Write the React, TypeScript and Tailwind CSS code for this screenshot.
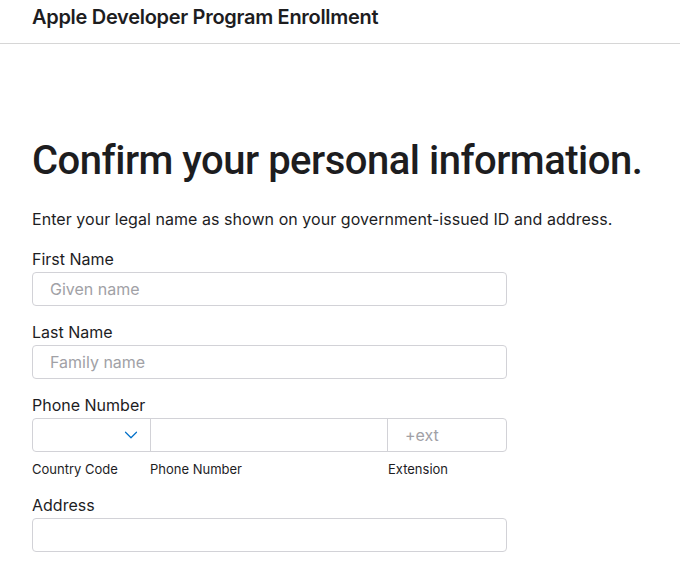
import { ChevronDown } from 'lucide-react'

const font = { fontFamily: 'Inter, "Liberation Sans", sans-serif' }
const headFont = { fontFamily: 'Roboto, "Liberation Sans", sans-serif' }

function Field({ label, placeholder }: { label: string; placeholder?: string }) {
  return (
    <div className="mb-[16px]">
      <label className="block text-[16px] leading-[20px] text-[#1d1d1f] mb-[3px]">{label}</label>
      <input
        placeholder={placeholder}
        className="w-[475px] h-[34px] rounded-[4px] border border-[#d2d2d7] px-[17px] text-[16px] text-[#1d1d1f] placeholder:text-[#a1a1a6] outline-none"
      />
    </div>
  )
}

export default function App() {
  return (
    <div className="w-[680px] h-[568px] bg-white overflow-hidden" style={font}>
      <header className="h-[44px] border-b border-[#d6d6d6] flex items-center px-[32px] pb-[9px]">
        <h1 className="text-[20px] font-semibold text-[#1d1d1f] tracking-[-0.3px]">
          Apple Developer Program Enrollment
        </h1>
      </header>

      <main className="px-[32px] pt-[93px]">
        <h2
          className="text-[40px] leading-[48px] font-medium text-[#1d1d1f] tracking-[-0.5px] mb-[24px] whitespace-nowrap"
          style={headFont}
        >
          Confirm your personal information.
        </h2>
        <p className="text-[16px] leading-[20px] text-[#1d1d1f] tracking-[0.05px] mb-[20px]">
          Enter your legal name as shown on your government-issued ID and address.
        </p>

        <Field label="First Name" placeholder="Given name" />
        <Field label="Last Name" placeholder="Family name" />

        <div className="mb-[18px]">
          <label className="block text-[16px] leading-[20px] text-[#1d1d1f] mb-[3px]">Phone Number</label>
          <div className="flex w-[475px] h-[34px] rounded-[4px] border border-[#d2d2d7]">
            <div className="w-[118px] flex items-center justify-end pr-[8px] border-r border-[#d2d2d7]">
              <ChevronDown className="w-[22px] h-[22px] text-[#0070c9]" strokeWidth={1.3} />
            </div>
            <input className="flex-1 min-w-0 px-[14px] outline-none" />
            <input
              placeholder="+ext"
              className="w-[119px] border-l border-[#d2d2d7] px-[17px] text-[16px] placeholder:text-[#a1a1a6] outline-none rounded-r-[4px]"
            />
          </div>
          <div className="flex w-[475px] text-[13px] leading-[16px] text-[#1d1d1f] mt-[9px]">
            <span className="w-[118px]">Country Code</span>
            <span className="flex-1">Phone Number</span>
            <span className="w-[119px]">Extension</span>
          </div>
        </div>

        <Field label="Address" />
      </main>
    </div>
  )
}
